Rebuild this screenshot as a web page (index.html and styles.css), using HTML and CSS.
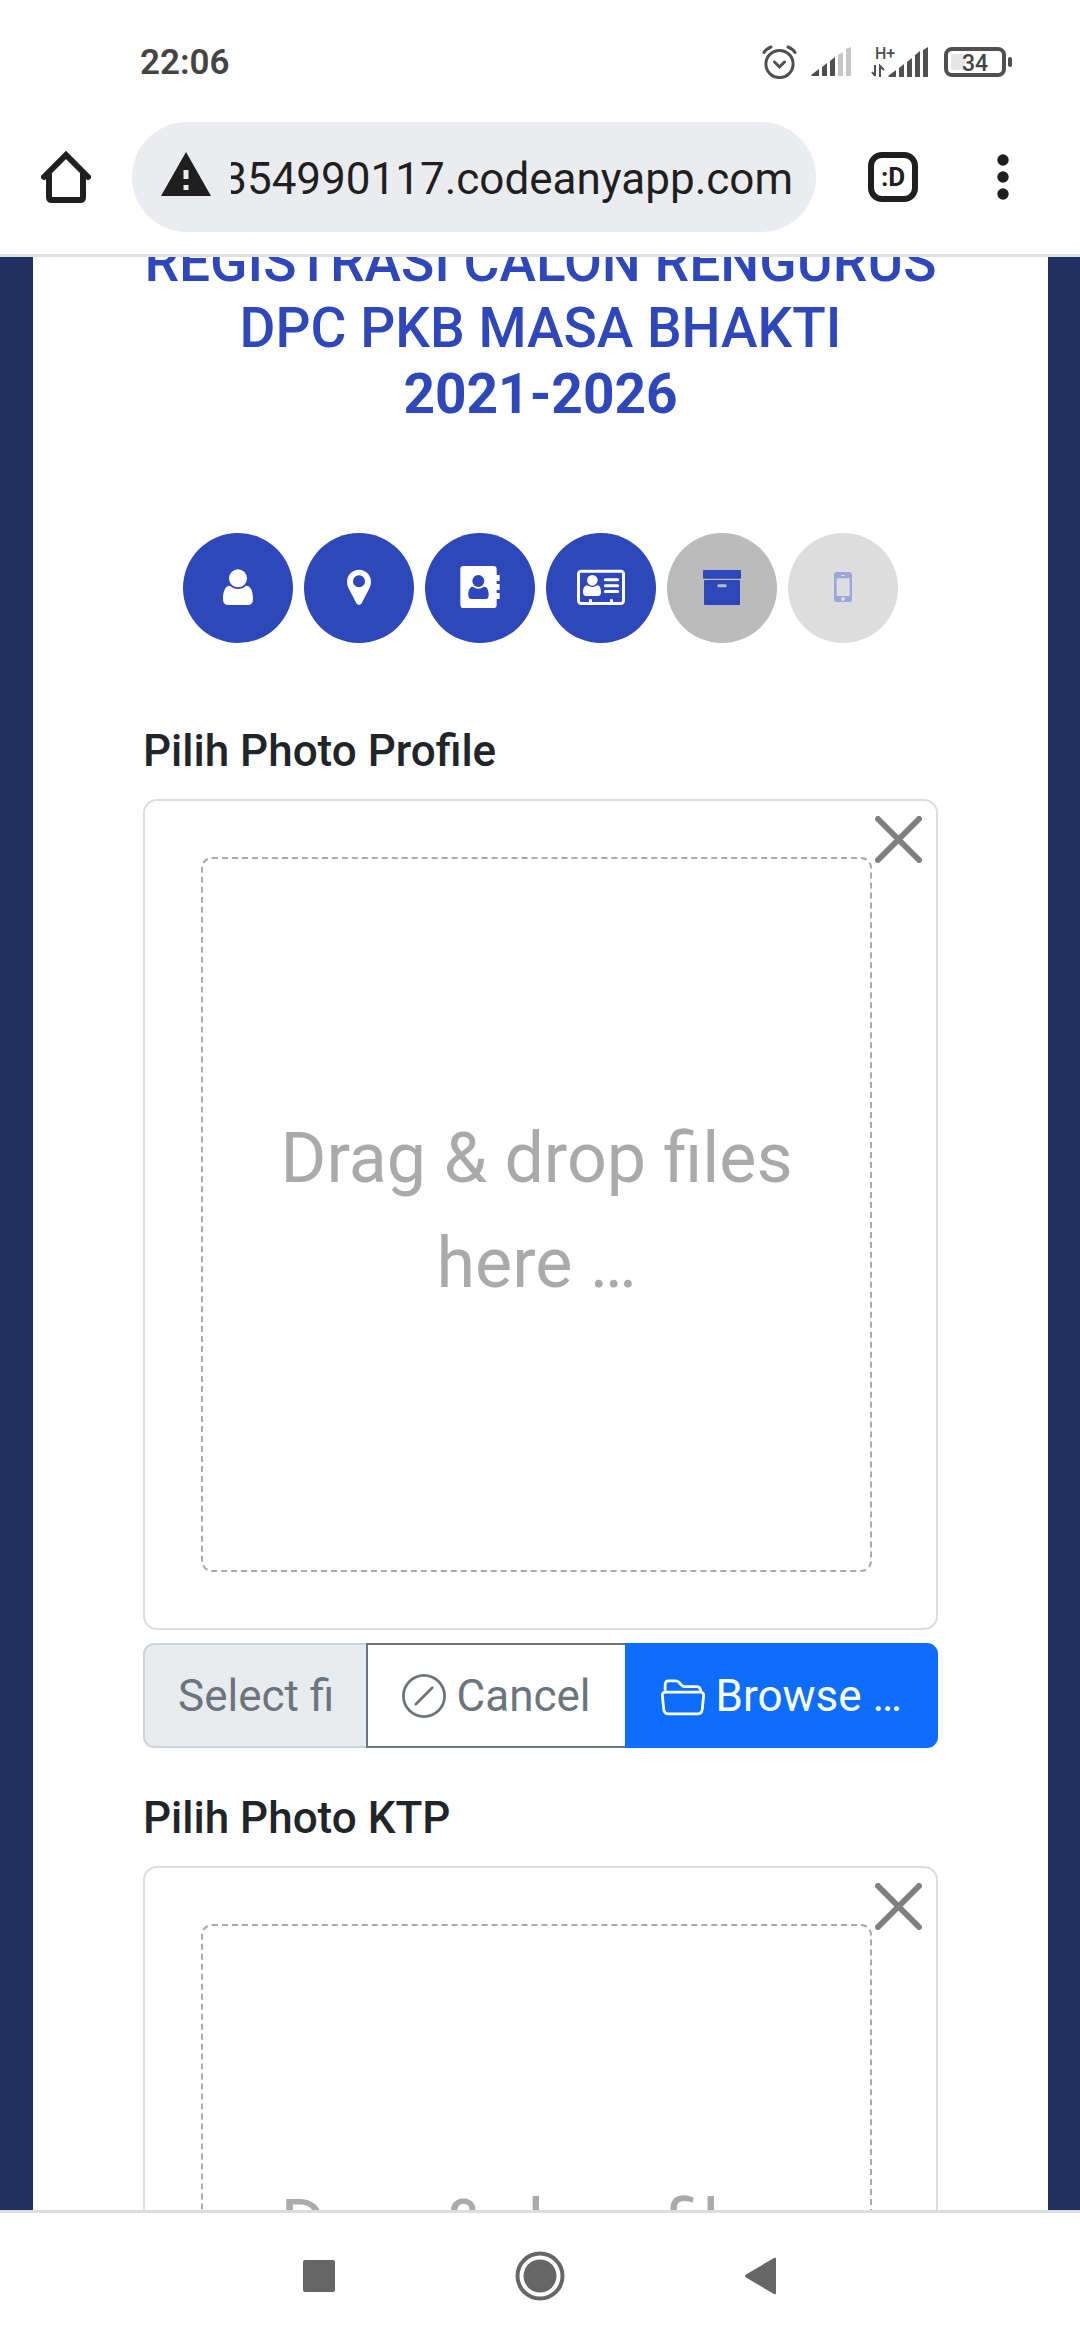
FILE: index.html
```html
<!DOCTYPE html>
<html lang="id">
<head>
<meta charset="utf-8">
<meta name="viewport" content="width=device-width, initial-scale=1">
<title>Registrasi Calon Pengurus</title>
<link rel="stylesheet" href="styles.css">
</head>
<body>
<div class="screen">
  <header class="chrome">
    <div class="status">
      <time class="clock">22:06</time>
      <div class="status-icons">
        <svg class="alarm" width="35" height="34" viewBox="0 0 35 34" fill="none" stroke="#505050" stroke-width="3" stroke-linecap="round" aria-hidden="true">
          <circle cx="17.500" cy="19" r="13.600"/><path d="M12.500 17l5 5 5-5M2 7.500Q4 4 9 2M33 7.500Q31 4 26 2"/>
        </svg>
        <svg class="signal" width="40" height="30" viewBox="0 0 40 30" fill="#505050" aria-hidden="true">
          <path d="M0 28l8-6v7H1zM11 20l5-4v13h-5zM19 14l5-4v19h-5z"/><path fill="#c6c6c6" d="M27 8l5-3v24h-5zM35 2l5-2v29h-5z"/>
        </svg>
        <svg class="network" width="57" height="32" viewBox="0 0 57 32" fill="#505050" aria-hidden="true">
          <text class="tiny" x="4" y="13">H+</text>
          <path d="M17 30l8-6v7h-7zM28 22l5-4v13h-5zM36 16l5-4v19h-5zM44 9l5-4v26h-5zM52 4l5-3v30h-5z"/>
          <path d="M4 19v11M1 26l3 4M9 31V20l4 4" fill="none" stroke="#505050" stroke-width="2"/>
        </svg>
        <svg class="battery" width="68" height="30" viewBox="0 0 68 30" aria-hidden="true">
          <rect x="2" y="2" width="58" height="26" rx="6" fill="#fff" stroke="#505050" stroke-width="4"/>
          <path fill="#e6e6e6" d="M10 7h11v16H10q-3 0-3-3V10q0-3 3-3z"/>
          <rect x="64" y="10" width="4" height="10" rx="2" fill="#505050"/>
          <text class="level" x="31" y="24" text-anchor="middle">34</text>
        </svg>
      </div>
    </div>
    <div class="toolbar">
      <button class="tool" type="button" aria-label="Home">
        <svg width="50" height="52" viewBox="0 0 50 52" fill="none" stroke="#1f1f1f" stroke-width="6" stroke-linecap="round" aria-hidden="true"><path d="M3 26L25 4l22 22"/><path d="M8 22v24q0 3 3 3h28q3 0 3-3V22"/></svg>
      </button>
      <div class="omnibox">
        <svg width="50" height="44" viewBox="0 0 50 44" aria-hidden="true"><path fill="#1f1f1f" d="M25 0l25 44H0z"/><path fill="#ebecf0" d="M22.500 18h5v9h-5zM22.500 33h5v5h-5z"/></svg>
        <div class="url-window"><input class="url" type="text" aria-label="Address" value="354990117.codeanyapp.com"></div>
      </div>
      <button class="tool tabs" type="button" aria-label="Tabs">:D</button>
      <button class="tool" type="button" aria-label="Menu">
        <svg width="12" height="46" viewBox="0 0 12 46" fill="#1f1f1f" aria-hidden="true"><circle cx="6" cy="6" r="5.700"/><circle cx="6" cy="23" r="5.700"/><circle cx="6" cy="40" r="5.700"/></svg>
      </button>
    </div>
  </header>

  <main class="viewport">
    <div class="card">
      <h1 class="title">REGISTRASI CALON RENGURUS DPC PKB MASA BHAKTI <strong>2021-2026</strong></h1>

      <nav class="steps" aria-label="Langkah">
        <button class="step" type="button" aria-label="Profil">
          <svg viewBox="0 0 330 330" fill="currentColor"><circle cx="165" cy="136" r="27"/><path d="M141 158C155 171 175 171 189 158C206 158 210 180 210 198Q210 216 194 216H136Q120 216 120 198C120 180 124 158 141 158z"/></svg>
        </button>
        <button class="step" type="button" aria-label="Alamat">
          <svg viewBox="0 0 330 330" fill="currentColor"><path fill-rule="evenodd" d="M165 110a36 36 0 0 1 36 36q0 10-4 18l-24 47q-8 10-16 0l-24-47q-4-8-4-18a36 36 0 0 1 36-36zM165 127a18 18 0 1 0 0 36 18 18 0 1 0 0-36z"/></svg>
        </button>
        <button class="step" type="button" aria-label="Kontak">
          <svg viewBox="0 0 330 330" fill="currentColor"><rect x="106" y="99" width="109" height="126" rx="10"/><path d="M210 126h14v18h-14zM210 153h14v18h-14zM210 180h14v18h-14z"/><g fill="#2e47ba"><circle cx="160" cy="144" r="18"/><path d="M143 161Q160 173 177 161C188 161 191 174 191 186Q191 198 182 198H139Q130 198 130 186C130 174 133 161 143 161z"/></g></svg>
        </button>
        <button class="step" type="button" aria-label="Identitas">
          <svg viewBox="0 0 330 330" fill="currentColor"><rect x="97.500" y="114.500" width="135" height="97" rx="8" fill="none" stroke="currentColor" stroke-width="9"/><circle cx="139" cy="142" r="16"/><path d="M124 157Q139 167 154 157C163 157 165 169 165 178Q165 189 156 189H120Q111 189 111 178C111 169 114 157 124 157z"/><path d="M129 199h9v10h-9zM192 199h9v10h-9z"/><path stroke="currentColor" stroke-width="9" stroke-linecap="round" d="M178 140.500h37M178 158h37M178 175.500h37"/></svg>
        </button>
        <button class="step current" type="button" aria-label="Berkas" aria-current="step">
          <svg viewBox="0 0 330 330" fill="currentColor"><rect x="108" y="111" width="114" height="26" rx="3"/><rect x="111" y="141" width="108" height="75" rx="3"/><rect x="151" y="154" width="28" height="9" rx="4" fill="#bbb"/></svg>
        </button>
        <button class="step upcoming" type="button" aria-label="Telepon" disabled>
          <svg viewBox="0 0 330 330" fill="currentColor"><path fill-rule="evenodd" d="M147 117h36q9 0 9 9v72q0 9-9 9h-36q-9 0-9-9v-72q0-9 9-9zM146 136v53h39v-53zM159 126v3h12v-3zM165 192a6 6 0 1 0 0 12 6 6 0 1 0 0-12z"/></svg>
        </button>
      </nav>

      <section class="upload">
        <label class="upload-label" for="profile">Pilih Photo Profile</label>
        <div class="preview">
          <button class="close" type="button" aria-label="Close"><svg width="47" height="47" viewBox="0 0 47 47" stroke="#808080" stroke-width="6" stroke-linecap="round"><path d="M3 3l41 41M44 3L3 44"/></svg></button>
          <div class="dropzone">Drag &amp; drop files here …</div>
        </div>
        <div class="picker">
          <input class="caption" id="profile" type="text" placeholder="Select files ..." readonly>
          <button class="btn cancel" type="button"><svg width="44" height="44" viewBox="0 0 16 16" fill="currentColor"><path d="M8 15A7 7 0 1 1 8 1a7 7 0 0 1 0 14m0 1A8 8 0 1 0 8 0a8 8 0 0 0 0 16"/><path d="M11.354 4.646a.5.5 0 0 0-.708 0l-6 6a.5.5 0 0 0 .708.708l6-6a.5.5 0 0 0 0-.708"/></svg>Cancel</button>
          <button class="btn browse" type="button"><svg width="44" height="44" viewBox="0 0 16 16" fill="none" stroke="currentColor"><path d="M1.500 6V3.900Q1.500 2.500 2.900 2.500H5.300Q6 2.500 6.500 3L7.300 3.900Q7.900 4.600 8.700 4.600H12.900Q14.500 4.600 14.500 6.600M1.700 6.600H14.300Q15.600 6.600 15.500 7.900L15 12.900Q14.800 14.500 13.200 14.500H2.800Q1.200 14.500 1 12.900L.5 7.900Q.4 6.600 1.700 6.600z"/></svg>Browse …</button>
        </div>
      </section>

      <section class="upload">
        <label class="upload-label" for="ktp">Pilih Photo KTP</label>
        <div class="preview">
          <button class="close" type="button" aria-label="Close"><svg width="47" height="47" viewBox="0 0 47 47" stroke="#808080" stroke-width="6" stroke-linecap="round"><path d="M3 3l41 41M44 3L3 44"/></svg></button>
          <div class="dropzone">Drag &amp; drop files here …</div>
        </div>
        <div class="picker">
          <input class="caption" id="ktp" type="text" placeholder="Select files ..." readonly>
        </div>
      </section>
    </div>
  </main>

  <nav class="system-nav" aria-label="System">
    <button class="tool" type="button" aria-label="Recents"><svg width="32" height="32" viewBox="0 0 32 32"><rect width="32" height="32" rx="2" fill="#666"/></svg></button>
    <button class="tool" type="button" aria-label="Home"><svg width="50" height="50" viewBox="0 0 50 50"><circle cx="25" cy="25" r="22.500" fill="none" stroke="#666" stroke-width="4"/><circle cx="25" cy="25" r="16.500" fill="#666"/></svg></button>
    <button class="tool" type="button" aria-label="Back"><svg width="32" height="38" viewBox="0 0 32 38"><path fill="#666" d="M1 17.500L29 1q2-1 2 1v34q0 2-2 1L1 20.500q-2-1.500 0-3z"/></svg></button>
  </nav>
</div>
</body>
</html>
```

FILE: styles.css
```css
* {
  box-sizing: border-box;
}

body {
  margin: 0;
  font-family: Roboto, "Noto Sans", sans-serif;
  font-size: 44px;
  color: #212529;
  background: #fff;
}

button,
input {
  margin: 0;
  padding: 0;
  border: 0;
  background: none;
  font: inherit;
  color: inherit;
}

svg {
  display: block;
  flex: none;
}

.screen {
  display: flex;
  flex-direction: column;
  height: 100vh;
}

/* Status bar and browser toolbar */
.chrome {
  flex: none;
  border-bottom: 3px solid #e0e2e1;
}

.status {
  display: flex;
  align-items: center;
  justify-content: space-between;
  height: 122px;
  padding: 2px 68px 0 140px;
}

.clock {
  font-size: 35px;
  font-weight: 600;
  color: #444;
}

.status-icons {
  display: flex;
  align-items: center;
}

.signal {
  margin-left: 14px;
}

.network {
  margin-left: 20px;
}

.battery {
  margin-left: 16px;
}

.tiny {
  font-size: 16px;
  font-weight: 500;
}

.level {
  font-size: 23px;
  font-weight: 500;
  fill: #444;
}

.toolbar {
  display: flex;
  align-items: center;
  padding: 0 52px 22px 41px;
}

.tool {
  display: flex;
  flex: none;
  align-items: center;
  justify-content: center;
  width: 50px;
  height: 50px;
}

.omnibox {
  display: flex;
  flex: 1;
  align-items: center;
  gap: 20px;
  min-width: 0;
  height: 110px;
  margin: 0 52px 0 41px;
  padding: 0 23px 0 29px;
  border-radius: 55px;
  background: #ebecf0;
}

.omnibox svg {
  margin-bottom: 6px;
}

.url-window {
  display: flex;
  flex: 1;
  justify-content: flex-end;
  min-width: 0;
  overflow: hidden;
}

.url {
  flex: none;
  width: 600px;
  padding-top: 4px;
  text-align: right;
  color: #1f1f1f;
}

.tabs {
  margin-right: 60px;
  border: 6px solid #1f1f1f;
  border-radius: 14px;
  font-size: 26px;
  font-weight: 700;
  color: #1f1f1f;
}

/* Page */
.viewport {
  flex: 1;
  min-height: 0;
  overflow: hidden;
  padding: 0 32px 0 33px;
  background: #1f3161;
}

.card {
  display: flow-root;
  padding: 0 110px;
  background: #fff;
}

.title {
  margin: -28px 0 106px;
  font-size: 55px;
  font-weight: 500;
  line-height: 66px;
  text-align: center;
  color: #2e47ba;
}

.title strong {
  display: block;
  font-weight: 700;
}

.steps {
  display: flex;
  justify-content: center;
  gap: 11px;
  margin-bottom: 82px;
}

.step {
  width: 110px;
  height: 110px;
  border-radius: 50%;
  background: #2e47ba;
  color: #fff;
}

.step.current {
  background: #bbb;
  color: #2e47ba;
}

.step.upcoming {
  background: #ddd;
  color: #9aa6dc;
}

.upload {
  margin-bottom: 44px;
}

.upload-label {
  display: block;
  margin-bottom: 21px;
  font-weight: 500;
  line-height: 53px;
}

.preview {
  position: relative;
  padding: 56px 64px 56px 56px;
  border: 2px solid #ddd;
  border-radius: 14px;
}

.close {
  position: absolute;
  top: 15px;
  right: 14px;
}

.dropzone {
  min-height: 715px;
  padding: 247px 28px 0;
  border: 2px dashed #aaa;
  border-radius: 11px;
  font-size: 70px;
  line-height: 105px;
  text-align: center;
  color: #aaa;
}

.picker {
  display: flex;
  height: 105px;
  margin-top: 13px;
}

.caption {
  flex: 1;
  min-width: 0;
  padding: 0 33px;
  border: 2px solid #ced4da;
  border-radius: 11px 0 0 11px;
  background: #e9ecef;
}

.caption::placeholder {
  color: #6c757d;
  opacity: 1;
}

.btn {
  display: flex;
  flex: none;
  align-items: center;
  gap: 11px;
  margin-left: -2px;
  padding: 0 34px;
  border: 2px solid #6c757d;
}

.cancel {
  background: #fff;
  color: #6c757d;
}

.browse {
  border-color: #0d6efd;
  border-radius: 0 11px 11px 0;
  background: #0d6efd;
  color: #fff;
}

/* System navigation */
.system-nav {
  display: flex;
  flex: none;
  align-items: center;
  justify-content: center;
  gap: 171px;
  height: 130px;
  padding-bottom: 2px;
  border-top: 3px solid #dcdedd;
}
```
